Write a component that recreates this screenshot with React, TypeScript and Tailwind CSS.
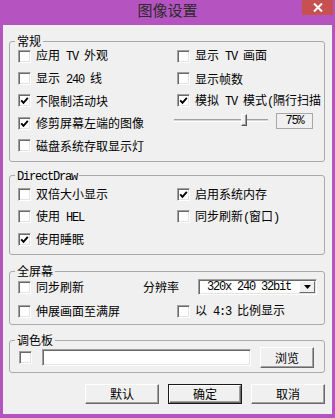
import React from "react";

const M = ({ children }: { children: React.ReactNode }) => (
  <span className="whitespace-pre font-['Liberation_Mono',monospace] text-[12px] tracking-[-1.2px]">{children}</span>
);

function Check({ checked = false }: { checked?: boolean }) {
  return (
    <span className="flex h-[13px] w-[13px] shrink-0 items-center justify-center border border-b-white border-l-[#a0a0a0] border-r-white border-t-[#a0a0a0] bg-white shadow-[inset_1px_1px_0_#696969,inset_-1px_-1px_0_#e3e3e3]">
      {checked && (
        <svg width="9" height="9" viewBox="0 0 9 9">
          <path d="M1.2 4.3 L3.5 6.8 L7.8 1.8" fill="none" stroke="#000" strokeWidth="1.9" />
        </svg>
      )}
    </span>
  );
}

function CB({ checked = false, cls, children }: { checked?: boolean; cls: string; children: React.ReactNode }) {
  return (
    <div className={"flex items-center gap-[5px] whitespace-nowrap " + cls}>
      <Check checked={checked} />
      <span>{children}</span>
    </div>
  );
}

function Btn({ children, cls }: { children: React.ReactNode; cls: string }) {
  return (
    <div className={"flex items-center justify-center border border-b-[#696969] border-l-white border-r-[#696969] border-t-white bg-[#f0f0f0] shadow-[inset_-1px_-1px_0_#a0a0a0] " + cls}>
      {children}
    </div>
  );
}

const sunken =
  "border border-b-white border-l-[#a0a0a0] border-r-white border-t-[#a0a0a0] shadow-[inset_1px_1px_0_#696969,inset_-1px_-1px_0_#e3e3e3]";

export default function App() {
  return (
    <div className="flex h-[418px] w-[335px] flex-col bg-[#b553c0] font-['Noto_Sans_CJK_SC',sans-serif] text-[12px] leading-[14px] text-black">
      <div className="grid h-[25px] shrink-0 grid-cols-[1fr_auto_1fr]">
        <div />
        <div className="pt-[1px] text-[15px] leading-[18px] text-[#2b2b2b]">图像设置</div>
        <div className="flex justify-end pr-[2px]">
          <div className="flex h-[15px] w-[31px] items-center justify-center bg-[#c75050]">
            <svg width="10" height="9" viewBox="0 0 10 9">
              <path d="M1 0.5 L9 8.5 M9 0.5 L1 8.5" stroke="#fff" strokeWidth="2" />
            </svg>
          </div>
        </div>
      </div>

      <div className="mx-[3px] mb-[4px] flex flex-1 flex-col bg-[#f0f0f0] pl-[6px] pr-[7px]">
        {/* 常规 */}
        <fieldset className="mt-[10px] rounded-[3px] border border-[#a9a9a9] pb-[4px]">
          <legend className="ml-[5px] px-[2px] leading-[12px]">常规</legend>
          <div className="-mt-[2px] grid grid-cols-[159px_1fr] pl-[8px]">
            <div className="flex flex-col">
              <CB cls="h-[22.4px]">
                应用<M> TV </M>外观
              </CB>
              <CB cls="h-[22.4px]">
                显示<M> 240 </M>线
              </CB>
              <CB checked cls="h-[22.4px]">不限制活动块</CB>
              <CB checked cls="h-[22.4px]">修剪屏幕左端的图像</CB>
              <CB cls="h-[22.4px]">磁盘系统存取显示灯</CB>
            </div>
            <div className="flex flex-col">
              <CB cls="h-[22.4px]">
                显示<M> TV </M>画面
              </CB>
              <CB cls="h-[22.4px]">显示帧数</CB>
              <CB checked cls="h-[22.4px]">
                模拟<M> TV </M>模式<M>(</M>隔行扫描
              </CB>
              <div className="flex h-[22.4px] items-start pt-[0.5px]">
                <div className="-ml-[3px] flex h-[16px] w-[94px] items-center">
                  <div className="relative h-[3px] w-full border-b border-t border-b-white border-t-[#a0a0a0] bg-[#d4d4d4]">
                    <div className="absolute left-[67px] top-[-6px] h-[12px] w-[6px] border border-b-[#555] border-l-white border-r-[#555] border-t-white bg-[#f0f0f0] shadow-[inset_-1px_-1px_0_#a0a0a0]" />
                  </div>
                </div>
                <div className="ml-[8px] flex h-[16px] w-[37px] items-center justify-center border border-[#a8a8a8]">
                  <M>75%</M>
                </div>
              </div>
              <div className="h-[22.4px]" />
            </div>
          </div>
        </fieldset>

        {/* DirectDraw */}
        <fieldset className="mt-[7px] rounded-[3px] border border-[#a9a9a9] pb-[4px]">
          <legend className="ml-[5px] px-[2px] leading-[12px]">
            <M>DirectDraw</M>
          </legend>
          <div className="grid grid-cols-[159px_1fr] pl-[8px]">
            <div className="flex flex-col">
              <CB cls="h-[22.5px]">双倍大小显示</CB>
              <CB cls="h-[22.5px]">
                使用<M> HEL</M>
              </CB>
              <CB checked cls="h-[22.5px]">使用睡眠</CB>
            </div>
            <div className="flex flex-col">
              <CB checked cls="h-[22.5px]">启用系统内存</CB>
              <CB cls="h-[22.5px]">
                同步刷新<M>(</M>窗口<M>)</M>
              </CB>
            </div>
          </div>
        </fieldset>

        {/* 全屏幕 */}
        <fieldset className="mt-[10px] rounded-[3px] border border-[#a9a9a9] pb-[1px]">
          <legend className="ml-[5px] px-[2px] leading-[12px]">全屏幕</legend>
          <div className="-mt-[2px] flex flex-col pl-[8px]">
            <div className="grid h-[24px] grid-cols-[125px_55px_119px] items-center">
              <CB cls="h-[24px]">同步刷新</CB>
              <span>分辨率</span>
              <div className={"flex h-[16px] items-center justify-between bg-white pl-[8px] pr-[1px] " + sunken}>
                <M>320x 240 32bit</M>
                <div className="flex h-[12px] w-[16px] items-center justify-center border border-b-[#696969] border-l-white border-r-[#696969] border-t-white bg-[#f0f0f0]">
                  <svg width="7" height="4" viewBox="0 0 7 4">
                    <path d="M0 0 H7 L3.5 4 Z" fill="#000" />
                  </svg>
                </div>
              </div>
            </div>
            <div className="grid h-[24px] grid-cols-[159px_1fr] items-center">
              <CB cls="h-[24px]">伸展画面至满屏</CB>
              <CB cls="h-[24px]">
                以<M> 4:3 </M>比例显示
              </CB>
            </div>
          </div>
        </fieldset>

        {/* 调色板 */}
        <fieldset className="mt-[9px] rounded-[3px] border border-[#a9a9a9] pb-[3px]">
          <legend className="ml-[5px] px-[2px] leading-[12px]">调色板</legend>
          <div className="flex h-[23px] items-center pl-[9px]">
            <Check />
            <div className={"ml-[10px] h-[17px] w-[209px] bg-white " + sunken} />
            <Btn cls="ml-[9px] h-[21px] w-[54px]">浏览</Btn>
          </div>
        </fieldset>

        <div className="mt-[11px] flex justify-end gap-[9px]">
          <Btn cls="h-[20px] w-[74px]">默认</Btn>
          <div className="flex h-[20px] w-[74px] border border-[#1a1a1a]">
            <Btn cls="flex-1">确定</Btn>
          </div>
          <Btn cls="h-[20px] w-[74px]">取消</Btn>
        </div>
      </div>
    </div>
  );
}
